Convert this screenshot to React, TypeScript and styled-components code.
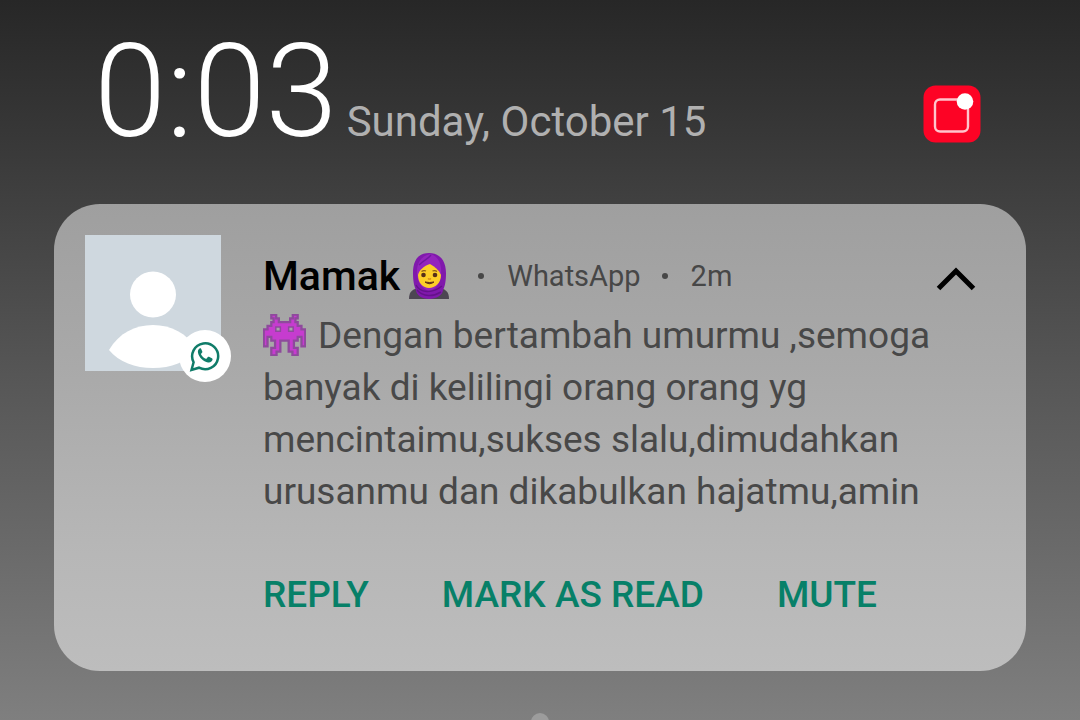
import React from "react";
import styled, { createGlobalStyle } from "styled-components";

const GlobalStyle = createGlobalStyle`
  *, *::before, *::after { box-sizing: border-box; }
  html { height: 100%; }
  body {
    margin: 0;
    min-height: 100%;
    font-family: Roboto, "Liberation Sans", sans-serif;
    background: linear-gradient(180deg, #272727 0%, #353535 16%, #424242 30%, #565656 52%, #696969 75%, #7f7f7f 100%) no-repeat;
    background-size: 100% 100vh;
    overflow: hidden;
  }
  h1, h2, p { margin: 0; }
`;

const Shade = styled.main`
  display: flex;
  flex-direction: column;
  padding: 8px 54px 0;
  height: 100vh;
  overflow: hidden;
`;

const Header = styled.header`
  display: flex;
  flex: none;
  align-items: baseline;
  padding: 0 45px 0 40px;
  height: 196px;
`;

const Clock = styled.time`
  padding-top: 4px;
  font-size: 130px;
  font-weight: 300;
  line-height: 160px;
  color: #fff;
`;

const DateText = styled.h1`
  margin-left: 9px;
  font-size: 42px;
  font-weight: 400;
  line-height: 52px;
  color: #b0b0b0;
  white-space: nowrap;
`;

const AppButton = styled.button`
  align-self: flex-start;
  margin: 77px 0 0 auto;
  padding: 0;
  border: 0;
  background: none;
  width: 58px;
  height: 58px;
  svg { display: block; }
`;

const Card = styled.article`
  display: flex;
  flex: none;
  gap: 42px;
  padding: 31px 50px 50px 31px;
  border-radius: 46px;
  background: linear-gradient(180deg, #9f9f9f 0%, #a9a9a9 35%, #b7b7b7 75%, #bdbdbd 100%);
`;

const Avatar = styled.div`
  position: relative;
  flex: none;
  width: 136px;
  height: 136px;
  background: #cfd8df;
  svg { display: block; }
`;

const Badge = styled.span`
  position: absolute;
  right: -10px;
  bottom: -11px;
  display: grid;
  place-items: center;
  width: 52px;
  height: 52px;
  border-radius: 50%;
  background: #fff;
`;

const Content = styled.div`
  flex: 1;
  min-width: 0;
  padding-top: 15px;
`;

const TitleRow = styled.div`
  display: flex;
  align-items: center;
  height: 52px;
`;

const Sender = styled.h2`
  display: flex;
  align-items: center;
  gap: 8px;
  font-size: 41px;
  font-weight: 500;
  line-height: 52px;
  color: #000;
`;

const Meta = styled.span`
  font-size: 29px;
  line-height: 52px;
  color: #474747;
`;

const Dot = styled.span`
  width: 6px;
  height: 6px;
  margin: 0 23px 0 21px;
  border-radius: 50%;
  background: #474747;
  h2 + & { margin-left: 28px; }
`;

const CollapseButton = styled.button`
  margin: 6px 0 0 auto;
  padding: 0;
  border: 0;
  background: none;
  svg { display: block; }
`;

const Message = styled.p`
  padding-top: 8px;
  font-size: 37px;
  line-height: 52px;
  color: #484848;
  svg { margin-right: 12px; vertical-align: -8px; }
`;

const Line = styled.span`
  display: block;
  height: 52px;
  white-space: nowrap;
`;

const Actions = styled.div`
  display: flex;
  gap: 73px;
  margin-top: 51px;
`;

const Action = styled.button`
  padding: 0;
  border: 0;
  background: none;
  font: 500 37px/52px Roboto, "Liberation Sans", sans-serif;
  color: #078068;
  white-space: nowrap;
`;

const PageDot = styled.span`
  flex: none;
  align-self: center;
  width: 18px;
  height: 18px;
  margin-top: 42px;
  border-radius: 50%;
  background: #9c9c9c;
`;

const NotificationIcon = () => (
  <svg width="58" height="58" viewBox="0 0 58 58" aria-hidden="true">
    <rect x="0.5" y="0.5" width="57" height="57" rx="12" fill="#fd0325" />
    <rect x="12" y="14.5" width="33" height="32" rx="5" fill="none" stroke="#ffc4cc" strokeWidth="2.4" />
    <circle cx="42" cy="16.5" r="8.3" fill="#fff" />
  </svg>
);

const PersonIcon = () => (
  <svg width="136" height="136" viewBox="0 0 136 136" aria-hidden="true">
    <circle cx="68" cy="59.5" r="23" fill="#fff" />
    <path d="M24 115C34 98 50 90 68 90C86 90 102 98 112 115C102 127 86 133 68 133C50 133 34 127 24 115Z" fill="#fff" />
  </svg>
);

const WhatsAppIcon = () => (
  <svg width="32" height="32" viewBox="0 0 32 32" fill="#107c69" aria-hidden="true">
    <path d="M2.5 30L4.600 22.200A13 13 0 1 1 10 27.700Z" fill="none" stroke="#107c69" strokeWidth="2.500" strokeLinejoin="miter" />
    <path d="M10.300 8.700C9.100 9.700 8.700 11 9 12.700C9.900 17.300 14.300 21.700 19 22.500C21.600 22.800 23.400 21.400 23.600 19.300C23.600 18.700 23.400 18.500 22.900 18.200L20 16.800C19.500 16.600 19.100 16.700 18.800 17.100L17.700 18.500C17.400 18.800 17.100 18.900 16.700 18.700C14.600 17.800 13.100 16.300 12.100 14.500C11.900 14.100 12 13.800 12.300 13.500L13.200 12.400C13.400 12.100 13.400 11.800 13.300 11.500L12.100 8.800C11.800 8.200 11 8.200 10.300 8.700Z" />
  </svg>
);

const HeadscarfEmoji = () => (
  <svg width="42" height="48" viewBox="0 0 42 48" role="img" aria-label="Woman with headscarf">
    <path d="M1 47C1 39 5 37 11 36H31C37 37 41 39 41 47Z" fill="#4c4652" />
    <path d="M21 1C9 1 5 10 5 21C5 29 6 34 8 38C8 43 14 47 21 47C28 47 35 43 35 38C37 34 38 29 38 21C38 9 32 1 21 1Z" fill="#8019ac" />
    <path d="M22 2C31 4 34 13 33 23C32 32 28 37 21 39C14 37 10 31 9 22C8 12 13 4 22 2Z" fill="#9425bd" />
    <path d="M22 12C16 14 11 18 10 23C10 31 15 36 21 36C27 36 33 31 33 23C31 18 27 15 22 12Z" fill="#fdcf28" />
    <circle cx="15.5" cy="23" r="2.300" fill="#573019" />
    <circle cx="27" cy="23" r="2.300" fill="#573019" />
    <path d="M13.500 19.500Q15.500 18 18 19M24.500 19Q27 18 29 19.500" fill="none" stroke="#8b5a18" strokeWidth="1.200" />
    <path d="M20 26.500Q21.500 27.800 23 26.500" fill="none" stroke="#d58b18" strokeWidth="1.300" />
    <path d="M17 30Q21.500 33.500 26 30Q21.500 31 17 30Z" fill="#603016" stroke="#603016" strokeWidth="1" />
    <path d="M8 33C12 41 24 42 34 34M9 38C15 45 25 45 33 40" fill="none" stroke="#64128b" strokeWidth="1.500" />
    <path d="M11 13C16 8 20 7 23 3" fill="none" stroke="#7117a0" strokeWidth="1.300" />
  </svg>
);

const InvaderEmoji = () => (
  <svg width="43" height="42" viewBox="-0.2 -0.2 11.4 11.4" preserveAspectRatio="none" role="img" aria-label="Alien monster">
    <path
      d="M2 0H3.300V1H4V2H7V1H7.700V0H9V1H8.400V2H9V3H10V4H11V8.600H10V6H9V7H8V9H9V11H7.600V10H6.600V7H4.400V10H3.400V11H2V9H3V7H2V6H1V8.600H0V4H1V3H2V2H2.600V1H2Z"
      fill="#c63ccf"
      stroke="#8e4a9c"
      strokeWidth="0.6"
    />
    <path d="M3.200 3.300H4.400V4.500H3.200ZM6.600 3.300H7.800V4.500H6.600Z" fill="#a9a4aa" stroke="#8e4a9c" strokeWidth="0.4" />
  </svg>
);

const ChevronUp = () => (
  <svg width="40" height="26" viewBox="0 0 40 26" fill="none" stroke="#000" strokeWidth="5" aria-hidden="true">
    <path d="M2.500 22.500L20 5L37.500 22.500" />
  </svg>
);

const lines = [
  "Dengan bertambah umurmu ,semoga",
  "banyak di kelilingi orang orang yg",
  "mencintaimu,sukses slalu,dimudahkan",
  "urusanmu dan dikabulkan hajatmu,amin",
];

const actions = ["REPLY", "MARK AS READ", "MUTE"];

export default function App() {
  return (
    <>
      <GlobalStyle />
      <Shade>
        <Header>
          <Clock>0:03</Clock>
          <DateText>Sunday, October 15</DateText>
          <AppButton type="button" aria-label="Notification settings">
            <NotificationIcon />
          </AppButton>
        </Header>
        <Card>
          <Avatar>
            <PersonIcon />
            <Badge>
              <WhatsAppIcon />
            </Badge>
          </Avatar>
          <Content>
            <TitleRow>
              <Sender>
                Mamak
                <HeadscarfEmoji />
              </Sender>
              <Dot />
              <Meta>WhatsApp</Meta>
              <Dot />
              <Meta>2m</Meta>
              <CollapseButton type="button" aria-label="Collapse">
                <ChevronUp />
              </CollapseButton>
            </TitleRow>
            <Message>
              {lines.map((line, index) => (
                <Line key={line}>
                  {index === 0 && <InvaderEmoji />}
                  {line}
                </Line>
              ))}
            </Message>
            <Actions>
              {actions.map((label) => (
                <Action key={label} type="button">
                  {label}
                </Action>
              ))}
            </Actions>
          </Content>
        </Card>
        <PageDot />
      </Shade>
    </>
  );
}
